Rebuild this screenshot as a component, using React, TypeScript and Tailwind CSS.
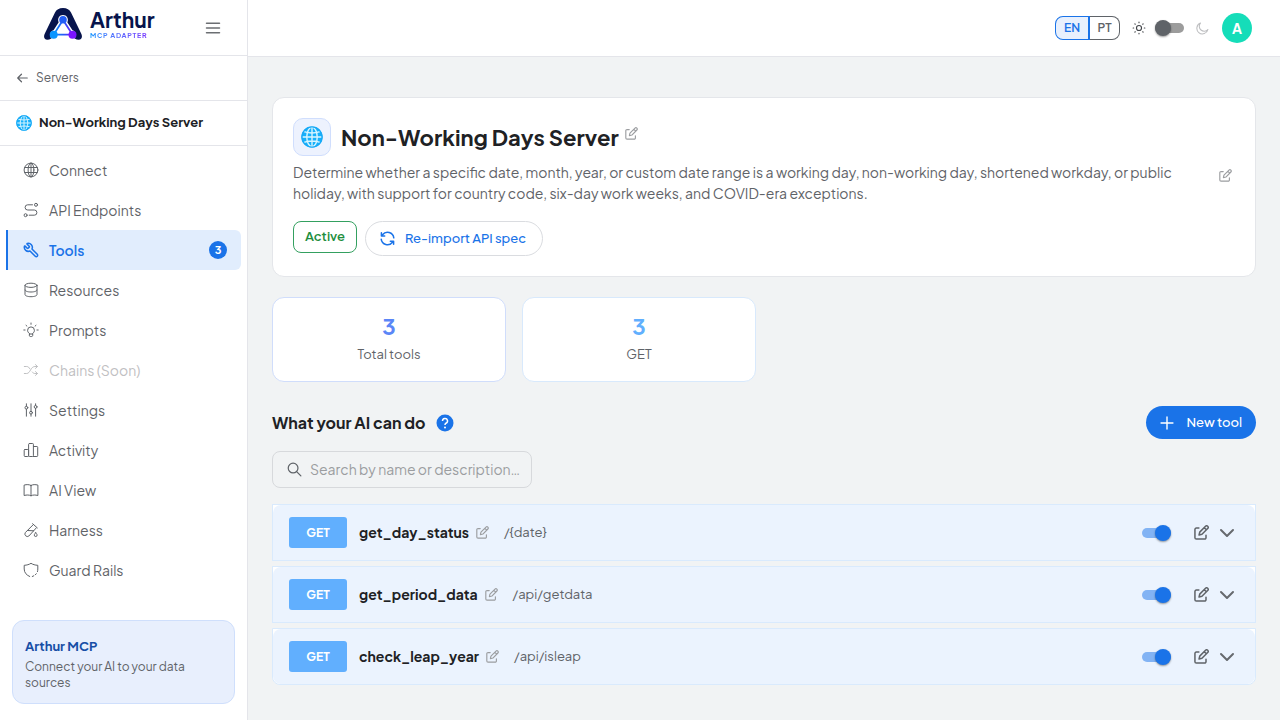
import { useState, type ReactNode } from "react";

function Icon({ size = 16, stroke = 1, className = "", children }: { size?: number; stroke?: number; className?: string; children: ReactNode }) {
  return (
    <svg
      width={size}
      height={size}
      viewBox="0 0 16 16"
      fill="none"
      stroke="currentColor"
      strokeWidth={stroke}
      strokeLinecap="round"
      strokeLinejoin="round"
      className={`shrink-0 ${className}`}
      aria-hidden="true"
    >
      {children}
    </svg>
  );
}

const glyphs = {
  connect: (
    <>
      <circle cx="8" cy="8" r="6.9" />
      <ellipse cx="8" cy="8" rx="2.9" ry="6.9" />
      <path d="M8 1.1v13.800M1.700 5.500h12.600M1.700 10.500h12.600" />
    </>
  ),
  api: (
    <>
      <circle cx="13" cy="2.8" r="1.5" />
      <circle cx="2.6" cy="13.2" r="1.5" />
      <path d="M9.5 2.8H4.7a2.600 2.600 0 0 0 0 5.200h6.600a2.600 2.600 0 0 1 0 5.200H6.200" />
    </>
  ),
  tools: (
    <g transform="translate(16 0) scale(-.6667 .6667)">
      <path
        strokeWidth="2.3"
        d="M14.7 6.3a1 1 0 0 0 0 1.4l1.6 1.6a1 1 0 0 0 1.4 0l3.106-3.105c.32-.322.863-.22.983.218a6 6 0 0 1-8.259 7.057l-7.91 7.91a1 1 0 0 1-2.999-3l7.91-7.91a6 6 0 0 1 7.057-8.259c.438.12.54.662.219.984z"
      />
    </g>
  ),
  resources: (
    <>
      <ellipse cx="8" cy="3.3" rx="6" ry="2.1" />
      <path d="M2 3.3v9.3c0 1.2 2.700 2.100 6 2.100s6-.9 6-2.100V3.3M2 8c0 1.2 2.700 2 6 2s6-.8 6-2" />
    </>
  ),
  prompts: (
    <>
      <path d="M6.3 11.4C5.2 10.7 4.6 9.6 4.6 8.3a3.4 3.4 0 0 1 6.8 0c0 1.3-.6 2.4-1.7 3.1v2.2c0 .5-.5.9-1 .9H7.3c-.5 0-1-.4-1-.9ZM6.3 12h3.4" />
      <path d="M8 1v1.3M3 3.3l.9.8M13 3.3l-.9.8M.8 8h1.3M13.9 8h1.3" />
    </>
  ),
  chains: (
    <path d="M1.3 4.5h2.4c1.5 0 2.4 1 3.1 2.2M9.2 10c.8 1 1.6 1.500 2.700 1.500h2.500M1.300 11.500h2.400c3.600 0 3.900-7 8.200-7h2.500M12.500 2.600l2 1.900-2 1.900M12.500 9.600l2 1.900-2 1.900" />
  ),
  settings: (
    <>
      <path d="M3.4 1.8v2.4M3.4 7.2v7M8 1.8v7.4M8 12.2v2M12.600 1.800v1.600M12.600 6.400v7.800" />
      <circle cx="3.4" cy="5.7" r="1.400" />
      <circle cx="8" cy="10.7" r="1.400" />
      <circle cx="12.6" cy="4.9" r="1.400" />
    </>
  ),
  activity: (
    <>
      <rect x="1.2" y="7.5" width="4.400" height="7" rx=".8" />
      <rect x="5.600" y="1.5" width="4.800" height="13" rx=".8" />
      <path d="M10.400 4.5h3.500c.5 0 .8.300.8.800v8.400c0 .5-.3.800-.8.800h-3.500" />
    </>
  ),
  view: (
    <path d="M8 3.4c-1.900-1-4.300-1-6.900-.3v10.400c2.600-.7 5-.7 6.900.3 1.900-1 4.300-1 6.900-.3V3.100C12.300 2.400 9.900 2.400 8 3.400Zm0 0v10.400" />
  ),
  harness: (
    <>
      <path d="m9.600 1.700 4.700 4.200M10.400 2.500l-8 8a2.500 2.500 0 0 0 3.500 3.500l7.300-8M4.600 8.500l6 .3" />
      <path d="M12.700 10.800c.9 1 1.400 1.600 1.400 2.300a1.400 1.400 0 0 1-2.800 0c0-.7.5-1.300 1.400-2.300Z" />
    </>
  ),
  guard: (
    <path d="M14.500 9.600c.2-.8.300-1.700.3-2.600V3.300C12.200 3.200 9.800 2.500 8 1.300 6.200 2.500 3.800 3.200 1.200 3.300V7c0 3.800 2.500 6.200 5.500 7.500M9.300 14.500l1.500-.7M12.400 12.700l.9-1" />
  ),
};

function Edit({ size = 13, stroke = 1.4 }: { size?: number; stroke?: number }) {
  return (
    <Icon size={size} stroke={stroke}>
      <path d="M5.2 3.200H2.500A1.500 1.500 0 0 0 1 4.700v8.800A1.500 1.500 0 0 0 2.500 15h8.800a1.500 1.500 0 0 0 1.500-1.500v-2.700" />
      <path d="m5.400 10.700.7-3.100L12.300 1.400a1.600 1.600 0 0 1 2.300 2.300L8.500 9.900ZM11 2.900l2.200 2.200" />
    </Icon>
  );
}

function Globe({ size }: { size: number }) {
  return (
    <svg width={size} height={size} viewBox="0 0 24 24" fill="none" className="shrink-0" aria-hidden="true">
      <circle cx="12" cy="12" r="11.5" fill="#17b0fb" />
      <g stroke="#d8f5ff" strokeWidth="1.5">
        <ellipse cx="12" cy="12" rx="5.700" ry="10.600" />
        <path d="M12 1v22M1 12h22M3.300 6.200c5 1.700 12.400 1.700 17.400 0M3.300 17.800c5-1.700 12.400-1.700 17.400 0" />
      </g>
      <circle cx="12" cy="12" r="11" stroke="#17a9f6" strokeWidth="1.500" />
    </svg>
  );
}

function Logo() {
  return (
    <a href="#home" aria-label="Arthur MCP Adapter" className="flex items-center gap-2">
      <svg width="38" height="32" viewBox="0 0 38 32" fill="none" aria-hidden="true">
        <defs>
          <linearGradient id="net" x1="8" y1="0" x2="30" y2="0" gradientUnits="userSpaceOnUse">
            <stop stopColor="#0a95ff" />
            <stop offset=".5" stopColor="#225df5" />
            <stop offset="1" stopColor="#7a14ff" />
          </linearGradient>
        </defs>
        <path d="M11 4.500C12.500 1.600 15 0 19 0s6.500 1.600 8 4.500L37.400 26c1.300 3.200.2 5.900-3 5.700-2.300-.1-4.300-1.700-6.300-1.700H9.900c-2 0-4 1.600-6.300 1.700-3.200.2-4.300-2.500-3-5.700Z" fill="#07144c" />
        <path d="M19 6.900a5 5 0 0 0-4.300 7.300L9.700 22A4.900 4.900 0 1 0 13 32l1-1.500h10l1 1.500a4.900 4.900 0 1 0 3.300-10l-5-7.800A5 5 0 0 0 19 6.900Z" fill="#fff" />
        <path d="M19 12 9.700 26.600h18.800Z" stroke="url(#net)" strokeWidth="1.800" />
        <circle cx="19" cy="11.700" r="3.800" fill="#225df5" />
        <circle cx="9.700" cy="26.700" r="4" fill="#0a95ff" />
        <circle cx="28.500" cy="26.700" r="4" fill="#7a14ff" />
      </svg>
      <span className="flex flex-col gap-0.5">
        <span className="text-[21px] leading-[21px] font-bold text-[#07144c]">Arthur</span>
        <span className="bg-linear-to-r from-[#0a95ff] to-[#7a14ff] bg-clip-text text-[7px] leading-[7px] font-bold tracking-widest text-transparent">MCP ADAPTER</span>
      </span>
    </a>
  );
}

const nav: { label: string; icon: ReactNode; count?: number; disabled?: boolean }[] = [
  { label: "Connect", icon: glyphs.connect },
  { label: "API Endpoints", icon: glyphs.api },
  { label: "Tools", icon: glyphs.tools, count: 3 },
  { label: "Resources", icon: glyphs.resources },
  { label: "Prompts", icon: glyphs.prompts },
  { label: "Chains (Soon)", icon: glyphs.chains, disabled: true },
  { label: "Settings", icon: glyphs.settings },
  { label: "Activity", icon: glyphs.activity },
  { label: "AI View", icon: glyphs.view },
  { label: "Harness", icon: glyphs.harness },
  { label: "Guard Rails", icon: glyphs.guard },
];

function Sidebar() {
  return (
    <aside className="flex w-62 shrink-0 flex-col border-r border-[#e4e5ea] bg-white">
      <div className="flex h-14 items-center justify-between border-b border-[#e4e5ea] pr-[26px] pb-2 pl-11">
        <Logo />
        <button type="button" aria-label="Toggle menu" className="mt-2 text-[#6b6e72]">
          <Icon size={16} stroke={1.5}>
            <path d="M1.500 3.300h13M1.500 8h13M1.500 12.700h13" />
          </Icon>
        </button>
      </div>
      <a href="#servers" className="flex h-[45px] items-center gap-2 border-b border-[#e4e5ea] px-4 text-[12px] text-[#5f6368]">
        <Icon size={12} stroke={1.6}>
          <path d="M15 8H2.500M7.300 3 2.300 8l5 5" />
        </Icon>
        Servers
      </a>
      <div className="flex h-[45px] items-center gap-[7px] border-b border-[#e4e5ea] px-4 text-[13px] font-bold text-[#202124]">
        <Globe size={16} />
        Non-Working Days Server
      </div>
      <nav className="flex flex-col px-1.5 pt-1">
        {nav.map((item) => {
          if (item.disabled) {
            return (
              <span key={item.label} className="flex h-10 items-center gap-2.5 border-l-2 border-transparent px-[15px] text-[14px] text-[#bfc0c2]">
                <Icon>{item.icon}</Icon>
                {item.label}
              </span>
            );
          }
          const active = item.count !== undefined;
          return (
            <a
              key={item.label}
              href={`#${item.label}`}
              aria-current={active ? "page" : undefined}
              className={`flex h-10 items-center gap-2.5 border-l-2 pr-3.5 pl-[15px] text-[14px] ${
                active ? "rounded-r-md border-[#1a73e8] bg-[#e1edfd] font-semibold text-[#1a73e8]" : "border-transparent text-[#5f6368]"
              }`}
            >
              <Icon>{item.icon}</Icon>
              <span className="grow">{item.label}</span>
              {active && (
                <span className="flex size-[18px] items-center justify-center rounded-full bg-[#1a73e8] text-[11px] font-bold text-white">{item.count}</span>
              )}
            </a>
          );
        })}
      </nav>
      <div className="mx-3 mt-auto mb-4 rounded-xl border border-[#cfdffc] bg-[#e8effd] px-3 pt-4 pb-3">
        <p className="text-[13px] leading-[18px] font-bold text-[#174ea6]">Arthur MCP</p>
        <p className="mt-1 text-[12px] leading-4 text-[#5f6368]">Connect your AI to your data sources</p>
      </div>
    </aside>
  );
}

function TopBar() {
  return (
    <header className="flex h-[57px] shrink-0 items-center justify-end border-b border-[#e4e5ea] bg-white pr-7">
      <div className="flex h-6 text-[12px] font-semibold">
        <button type="button" className="w-[35px] rounded-l-lg border border-r-2 border-[#1a73e8] bg-[#e8f0fd] text-[#1a73e8]">EN</button>
        <button type="button" className="w-[30px] rounded-r-lg border border-l-0 border-[#5f6368] text-[#5f6368]">PT</button>
      </div>
      <Icon size={14} stroke={1.3} className="mr-[9px] ml-3 text-[#44474b]">
        <circle cx="8" cy="8" r="2.900" />
        <path d="M8 1.300v.6M8 14.100v.6M1.300 8h.6M14.100 8h.6M3.300 3.300l.4.400M12.300 12.300l.4.400M12.700 3.300l-.4.400M3.700 12.300l-.4.400" />
      </Icon>
      <Toggle label="Dark theme" />
      <Icon size={13} stroke={1.3} className="mr-[13px] ml-[11px] text-[#bdbec0]">
        <path d="M5.500 1.300a6 6 0 0 0 9.200 7.900A6.900 6.900 0 1 1 5.500 1.300Z" />
      </Icon>
      <button type="button" aria-label="Account" className="size-[30px] rounded-full bg-[#15ddb9] text-[14px] font-bold text-white">A</button>
    </header>
  );
}

function Toggle({ label, initial = false }: { label: string; initial?: boolean }) {
  const [on, setOn] = useState(initial);
  return (
    <label className="flex w-[30px] cursor-pointer items-center">
      <input type="checkbox" role="switch" aria-label={label} checked={on} onChange={() => setOn(!on)} className="sr-only" />
      <span className={`flex h-2.5 w-[29px] items-center rounded-full ${on ? "justify-end bg-[#82b3f4]" : "justify-start bg-[#9c9c9c]"}`}>
        <span className={`size-4 shrink-0 rounded-full shadow-[0_1px_2px_rgba(0,0,0,0.4)] ${on ? "bg-[#1a73e8]" : "bg-[#5f6368]"}`} />
      </span>
    </label>
  );
}

function ServerCard() {
  return (
    <section className="rounded-xl border border-[#e4e6ea] bg-white p-5">
      <div className="flex items-center gap-2.5">
        <span className="flex size-[38px] items-center justify-center rounded-[10px] border border-[#d0defd] bg-[#edf2fe]">
          <Globe size={22} />
        </span>
        <h1 className="text-[22px] leading-7 font-bold text-[#202124]">Non-Working Days Server</h1>
        <button type="button" aria-label="Edit server name" className="mb-2 -ml-1 text-[#9b9da0]">
          <Edit />
        </button>
      </div>
      <div className="mt-1.5 flex items-center justify-between gap-10 pr-[3px]">
        <p className="max-w-[885px] text-[14px] leading-[21px] text-[#5f6368]">
          Determine whether a specific date, month, year, or custom date range is a working day, non-working day, shortened workday, or public
          holiday, with support for country code, six-day work weeks, and COVID-era exceptions.
        </p>
        <button type="button" aria-label="Edit description" className="mb-4 text-[#9b9da0]">
          <Edit />
        </button>
      </div>
      <div className="mt-[17px] flex items-start gap-2">
        <span className="flex h-8 items-center rounded-lg border border-[#34a060] px-[11px] text-[13px] font-semibold text-[#1e8e3e]">Active</span>
        <button type="button" className="flex h-[35px] items-center gap-2.5 rounded-full border border-[#dadce0] pr-4 pl-3.5 text-[13px] font-medium text-[#1a73e8]">
          <Icon size={15} stroke={1.6}>
            <path d="M1.300 8.700a6.700 6.700 0 0 0 12 3.300M14.700 7.300A6.700 6.700 0 0 0 2.700 4M1.500 1.800v3.400H5M14.500 14.200v-3.400H11" />
          </Icon>
          Re-import API spec
        </button>
      </div>
    </section>
  );
}

const stats = [
  { label: "Total tools", value: 3, style: "border-[#d0ddfb]", number: "text-[#5b86f7]" },
  { label: "GET", value: 3, style: "border-[#d8e9fc]", number: "text-[#61affe]" },
];

const tools = [
  { name: "get_day_status", path: "/{date}" },
  { name: "get_period_data", path: "/api/getdata" },
  { name: "check_leap_year", path: "/api/isleap" },
];

function ToolRow({ name, path, last }: { name: string; path: string; last: boolean }) {
  return (
    <li className={`border border-[#d9eafd] bg-white ${last ? "rounded-b-lg" : ""}`}>
      <div className={`flex h-[55px] items-center bg-[#ebf3fe] pr-5 pl-4 ${last ? "rounded-lg" : "rounded-t-lg"}`}>
        <span className="flex h-[31px] w-[58px] items-center justify-center rounded-[3px] bg-[#61affe] text-[12px] font-bold text-white">GET</span>
        <h3 className="ml-3 text-[14px] font-bold text-[#202124]">{name}</h3>
        <button type="button" aria-label={`Rename ${name}`} className="ml-[7px] text-[#9b9da0]">
          <Edit />
        </button>
        <span className="ml-[15px] grow text-[13px] text-[#5f6368]">{path}</span>
        <Toggle label={`Enable ${name}`} initial />
        <button type="button" aria-label={`Edit ${name}`} className="ml-[22px] text-[#5f6368]">
          <Edit size={15} stroke={1.6} />
        </button>
        <button type="button" aria-label={`Expand ${name}`} className="ml-2.5 text-[#66696e]">
          <Icon size={16} stroke={2}>
            <path d="m2 5 6 6 6-6" />
          </Icon>
        </button>
      </div>
    </li>
  );
}

export default function App() {
  return (
    <div className="flex min-h-screen bg-[#f1f3f4] font-['Plus_Jakarta_Sans',Inter,sans-serif]">
      <Sidebar />
      <div className="flex min-w-0 grow flex-col">
        <TopBar />
        <main className="px-6 pt-10 pb-8">
          <ServerCard />
          <div className="mt-5 grid grid-cols-4 gap-4">
            {stats.map((s) => (
              <div key={s.label} className={`flex h-[85px] flex-col items-center rounded-xl border bg-white pt-3.5 ${s.style}`}>
                <strong className={`text-[22px] leading-7 font-bold ${s.number}`}>{s.value}</strong>
                <span className="mt-1 text-[13px] leading-5 text-[#5f6368]">{s.label}</span>
              </div>
            ))}
          </div>
          <div className="mt-6 flex items-center justify-between">
            <div className="flex items-center gap-2.5">
              <h2 className="text-[16px] font-bold text-[#202124]">What your AI can do</h2>
              <button type="button" aria-label="Help" className="size-[18px] text-[#1a73e8]">
                <svg width="18" height="18" viewBox="0 0 18 18" fill="none" aria-hidden="true">
                  <circle cx="9" cy="9" r="8.500" fill="currentColor" />
                  <path d="M6.500 6.900A2.500 2.500 0 1 1 10 9.200c-.7.500-1 .9-1 1.700" stroke="#fff" strokeWidth="1.500" />
                  <circle cx="9" cy="13.400" r="1" fill="#fff" />
                </svg>
              </button>
            </div>
            <button type="button" className="flex h-[33px] items-center gap-3 rounded-full bg-[#1a73e8] px-3.5 text-[13px] font-medium text-white">
              <Icon size={14} stroke={1.6}>
                <path d="M8 1.200v13.600M1.200 8h13.600" />
              </Icon>
              New tool
            </button>
          </div>
          <label className="mt-3 flex h-[37px] w-65 items-center gap-2 rounded-lg border border-[#d7d9dc] pr-1 pl-3.5 text-[#5f6368]">
            <Icon size={15} stroke={1.3}>
              <circle cx="6.500" cy="6.500" r="5.200" />
              <path d="m10.300 10.300 4.500 4.500" />
            </Icon>
            <input
              type="text"
              aria-label="Search by name or description"
              placeholder="Search by name or description…"
              className="min-w-0 grow bg-transparent text-[14px] outline-none placeholder:text-[#9b9da0]"
            />
          </label>
          <ul className="mt-4 flex flex-col gap-[5px]">
            {tools.map((t, i) => (
              <ToolRow key={t.name} name={t.name} path={t.path} last={i === tools.length - 1} />
            ))}
          </ul>
        </main>
      </div>
    </div>
  );
}
